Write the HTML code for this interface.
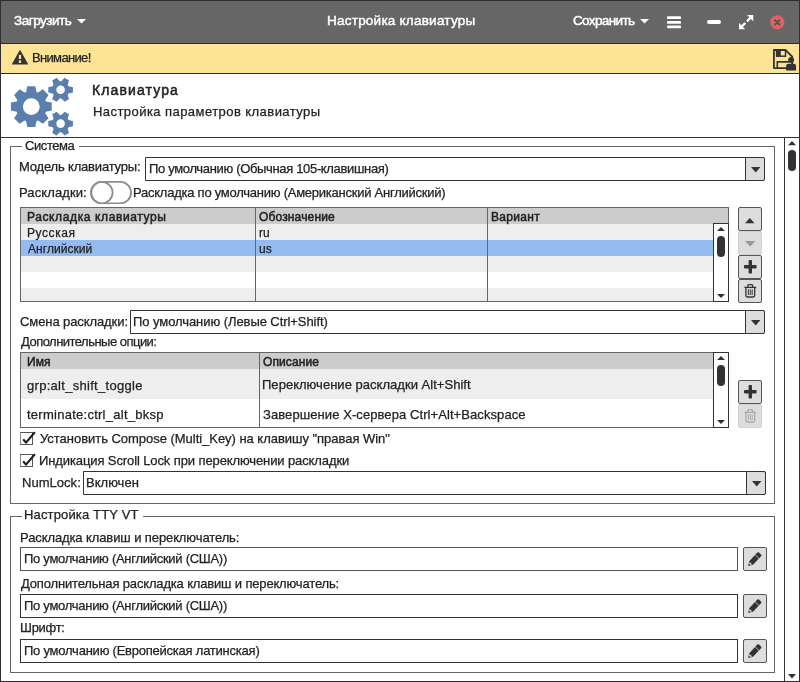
<!DOCTYPE html>
<html><head><meta charset="utf-8"><style>
html,body{margin:0;padding:0;width:800px;height:682px;overflow:hidden;background:#fff}
div{position:absolute}
.t{white-space:nowrap;font-family:"Liberation Sans",sans-serif;will-change:transform;-webkit-text-stroke:0.25px currentColor}
</style></head><body>
<div style="left:0px;top:0px;width:800px;height:682px;background:#fff"></div>
<div style="left:0px;top:0px;width:800px;height:44px;background:#666"></div>
<div style="left:0px;top:44px;width:800px;height:29px;background:#fde396"></div>
<div style="left:0px;top:0px;width:800px;height:1px;background:#2f2f2f"></div>
<div style="left:0px;top:681px;width:800px;height:1px;background:#2f2f2f"></div>
<div style="left:0px;top:0px;width:1px;height:682px;background:#2f2f2f"></div>
<div style="left:799px;top:0px;width:1px;height:682px;background:#2f2f2f"></div>
<div style="left:0px;top:43px;width:800px;height:1px;background:#2b2b2b"></div>
<div style="left:0px;top:73px;width:800px;height:1px;background:#2b2b2b"></div>
<div style="left:0px;top:137px;width:800px;height:1px;background:#333"></div>
<div class="t" style="left:13.56px;top:14.13px;font-size:13.5px;line-height:13.5px;letter-spacing:-0.475px;color:#fff;-webkit-text-stroke:0.45px #fff;">Загрузить</div>
<svg style="position:absolute;left:77px;top:19.4px" width="9" height="5" viewBox="0 0 9 5"><path d="M0 0H9L4.5 4.5Z" fill="#fff"/></svg>
<div class="t" style="left:326.89px;top:14.13px;font-size:13.5px;line-height:13.5px;letter-spacing:0.235px;color:#fff;-webkit-text-stroke:0.45px #fff;">Настройка клавиатуры</div>
<div class="t" style="left:573.31px;top:14.13px;font-size:13.5px;line-height:13.5px;letter-spacing:-0.625px;color:#fff;-webkit-text-stroke:0.45px #fff;">Сохранить</div>
<svg style="position:absolute;left:639.5px;top:19.4px" width="9" height="5" viewBox="0 0 9 5"><path d="M0 0H9L4.5 4.5Z" fill="#fff"/></svg>
<svg style="position:absolute;left:667px;top:16px" width="14" height="13" viewBox="0 0 14 13"><rect x="0" y="0.3" width="14" height="2.8" rx="0.9" fill="#fff"/><rect x="0" y="5.0" width="14" height="2.8" rx="0.9" fill="#fff"/><rect x="0" y="9.4" width="14" height="2.8" rx="0.9" fill="#fff"/></svg>
<svg style="position:absolute;left:707px;top:20px" width="14" height="4" viewBox="0 0 14 4"><rect x="0" y="0" width="14" height="4" rx="2" fill="#fff"/></svg>
<svg style="position:absolute;left:738.5px;top:14.8px" width="15" height="15" viewBox="0 0 15 15"><g fill="#fff" transform="scale(0.95)"><path d="M15 0 L15 6.5 L12.6 4.1 L9.2 7.5 L7.5 5.8 L10.9 2.4 L8.5 0Z"/><path d="M0 15 L0 8.5 L2.4 10.9 L5.8 7.5 L7.5 9.2 L4.1 12.6 L6.5 15Z"/></g></svg>
<svg style="position:absolute;left:769.5px;top:14.8px" width="15" height="15" viewBox="0 0 15 15"><circle cx="7.3" cy="7.3" r="7.1" fill="#e06262"/><path d="M5.1 5.1L9.5 9.5M9.5 5.1L5.1 9.5" stroke="#505050" stroke-width="1.8" stroke-linecap="round"/></svg>
<svg style="position:absolute;left:12px;top:50px" width="16" height="15" viewBox="0 0 16 15"><path d="M7.5 0.6 Q8 -0.2 8.5 0.6 L15.8 13.6 Q16.2 14.6 15.2 14.6 H0.8 Q-0.2 14.6 0.2 13.6Z" fill="#333"/><rect x="6.8" y="4.9" width="2.3" height="4.2" fill="#fde396"/><rect x="6.8" y="10.4" width="2.3" height="2.5" fill="#fde396"/></svg>
<div class="t" style="left:32.03px;top:50.75px;font-size:13px;line-height:13px;letter-spacing:-0.664px;color:#222;">Внимание!</div>
<svg style="position:absolute;left:773px;top:49px" width="24" height="22" viewBox="0 0 24 22"><path d="M0.9 1.0 H12.5 L19.2 7.7 V19.1 H0.9Z" fill="none" stroke="#333" stroke-width="1.8" stroke-linejoin="round"/><rect x="3.6" y="1.2" width="8.9" height="6" fill="none" stroke="#333" stroke-width="1.5"/><rect x="3.4" y="1" width="4.4" height="6.4" fill="#333"/><path d="M4.3 19 V12.85 H16" fill="none" stroke="#333" stroke-width="1.6"/><circle cx="18.1" cy="11" r="2.9" fill="#333"/><path d="M13.1 21.5 V17 Q13.1 14.8 15.5 14.8 H20.7 Q23.1 14.8 23.1 17 V21.5Z" fill="#333"/></svg>
<svg style="position:absolute;left:5px;top:74px" width="80" height="63" viewBox="0 0 80 63"><path fill-rule="evenodd" fill="#5a7fad" d="M21.10 18.00 L22.32 12.18 L30.28 12.18 L31.50 18.00 L32.95 18.60 L37.93 15.35 L43.55 20.97 L40.30 25.95 L40.90 27.40 L46.72 28.62 L46.72 36.58 L40.90 37.80 L40.30 39.25 L43.55 44.23 L37.93 49.85 L32.95 46.60 L31.50 47.20 L30.28 53.02 L22.32 53.02 L21.10 47.20 L19.65 46.60 L14.67 49.85 L9.05 44.23 L12.30 39.25 L11.70 37.80 L5.88 36.58 L5.88 28.62 L11.70 27.40 L12.30 25.95 L9.05 20.97 L14.67 15.35 L19.65 18.60Z M34.70 32.60 A8.4 8.4 0 1 0 17.90 32.60 A8.4 8.4 0 1 0 34.70 32.60Z"/><path fill-rule="evenodd" fill="#5a7fad" d="M63.53 12.21 L67.93 13.22 L67.93 18.38 L63.53 19.39 L62.67 20.87 L64.00 25.19 L59.53 27.77 L56.45 24.46 L54.75 24.46 L51.67 27.77 L47.20 25.19 L48.53 20.87 L47.67 19.39 L43.27 18.38 L43.27 13.22 L47.67 12.21 L48.53 10.73 L47.20 6.41 L51.67 3.83 L54.75 7.14 L56.45 7.14 L59.53 3.83 L64.00 6.41 L62.67 10.73Z M59.90 15.80 A4.3 4.3 0 1 0 51.30 15.80 A4.3 4.3 0 1 0 59.90 15.80Z"/><path fill-rule="evenodd" fill="#5a7fad" d="M63.53 46.01 L67.93 47.02 L67.93 52.18 L63.53 53.19 L62.67 54.67 L64.00 58.99 L59.53 61.57 L56.45 58.26 L54.75 58.26 L51.67 61.57 L47.20 58.99 L48.53 54.67 L47.67 53.19 L43.27 52.18 L43.27 47.02 L47.67 46.01 L48.53 44.53 L47.20 40.21 L51.67 37.63 L54.75 40.94 L56.45 40.94 L59.53 37.63 L64.00 40.21 L62.67 44.53Z M59.90 49.60 A4.3 4.3 0 1 0 51.30 49.60 A4.3 4.3 0 1 0 59.90 49.60Z"/></svg>
<div class="t" style="left:92.45px;top:82.60px;font-size:14px;line-height:14px;letter-spacing:1.112px;color:#222;-webkit-text-stroke:0.5px currentColor;">Клавиатура</div>
<div class="t" style="left:92.53px;top:105.05px;font-size:13px;line-height:13px;letter-spacing:0.443px;color:#222;">Настройка параметров клавиатуры</div>
<div style="left:784px;top:138px;width:1px;height:543px;background:#333"></div>
<svg style="position:absolute;left:788px;top:140.7px" width="8" height="5" viewBox="0 0 8 5"><path d="M0 4.2 L4 0 L8 4.2Z" fill="#333"/></svg>
<div style="left:788px;top:150px;width:8px;height:21px;background:#333;border-radius:4px"></div>
<svg style="position:absolute;left:788px;top:674px" width="8" height="5" viewBox="0 0 8 5"><path d="M0 0 L8 0 L4 4.5Z" fill="#333"/></svg>
<div style="left:10px;top:146px;width:765px;height:358px;box-sizing:border-box;border:1px solid #666;background:transparent;border-radius:0px;"></div>
<div style="left:22px;top:144px;width:57px;height:4px;background:#fff"></div>
<div class="t" style="left:24.74px;top:138.55px;font-size:13px;line-height:13px;letter-spacing:-0.424px;color:#222;">Система</div>
<div class="t" style="left:19.23px;top:159.75px;font-size:13px;line-height:13px;letter-spacing:-0.184px;color:#222;">Модель клавиатуры:</div>
<div style="left:145px;top:157px;width:620px;height:24px;box-sizing:border-box;border:1px solid #333;background:#fff;border-radius:0px;border-radius:0 2px 2px 0"></div>
<div style="left:745px;top:157px;width:20px;height:24px;box-sizing:border-box;border:1px solid #333;background:#ddd;border-radius:0px;border-radius:0 2px 2px 0"></div>
<svg style="position:absolute;left:751px;top:166.5px" width="10" height="6" viewBox="0 0 10 6"><path d="M0 0 L9.4 0 L4.7 5.6Z" fill="#333"/></svg>
<div class="t" style="left:148.55px;top:162.25px;font-size:13px;line-height:13px;letter-spacing:-0.336px;color:#222;">По умолчанию (Обычная 105-клавишная)</div>
<div class="t" style="left:19.23px;top:185.95px;font-size:13px;line-height:13px;letter-spacing:0.100px;color:#222;">Раскладки:</div>
<svg style="position:absolute;left:90px;top:181px" width="42" height="23" viewBox="0 0 42 23"><rect x="0.9" y="0.9" width="40.2" height="21.4" rx="10.7" fill="#fff" stroke="#8c8c8c" stroke-width="1.8"/><circle cx="11.9" cy="11.6" r="10.7" fill="#fff" stroke="#8c8c8c" stroke-width="1.8"/></svg>
<div class="t" style="left:133.43px;top:186.25px;font-size:13px;line-height:13px;letter-spacing:-0.243px;color:#222;">Раскладка по умолчанию (Американский Английский)</div>
<div style="left:21px;top:208px;width:707px;height:93px;background:#fff"></div>
<div style="left:21px;top:208px;width:707px;height:16px;background:#ccc"></div>
<div style="left:21px;top:224px;width:692px;height:16px;background:#eee"></div>
<div style="left:21px;top:240px;width:692px;height:16px;background:#93bbf0"></div>
<div style="left:21px;top:256px;width:692px;height:16px;background:#eee"></div>
<div style="left:21px;top:272px;width:692px;height:16px;background:#fff"></div>
<div style="left:21px;top:288px;width:692px;height:13px;background:#eee"></div>
<div style="left:20px;top:207px;width:709px;height:95px;box-sizing:border-box;border:1px solid #666;background:transparent;border-radius:0px;"></div>
<div style="left:255px;top:208px;width:1px;height:93px;background:#666"></div>
<div style="left:487px;top:208px;width:1px;height:93px;background:#666"></div>
<div class="t" style="left:26.92px;top:211.00px;font-size:12px;line-height:12px;letter-spacing:0.615px;color:#222;-webkit-text-stroke:0.5px currentColor;">Раскладка клавиатуры</div>
<div class="t" style="left:258.93px;top:211.00px;font-size:12px;line-height:12px;letter-spacing:0.149px;color:#222;-webkit-text-stroke:0.5px currentColor;">Обозначение</div>
<div class="t" style="left:490.52px;top:211.00px;font-size:12px;line-height:12px;letter-spacing:0.323px;color:#222;-webkit-text-stroke:0.5px currentColor;">Вариант</div>
<div class="t" style="left:26.92px;top:226.80px;font-size:12px;line-height:12px;letter-spacing:0.565px;color:#222;">Русская</div>
<div class="t" style="left:258.70px;top:226.80px;font-size:12px;line-height:12px;letter-spacing:0.000px;color:#222;">ru</div>
<div class="t" style="left:27.88px;top:242.80px;font-size:12px;line-height:12px;letter-spacing:0.054px;color:#222;">Английский</div>
<div class="t" style="left:258.72px;top:242.80px;font-size:12px;line-height:12px;letter-spacing:0.000px;color:#222;">us</div>
<div style="left:713px;top:223px;width:16px;height:79px;box-sizing:border-box;border:1px solid #333;background:#fff;border-radius:0px;"></div>
<svg style="position:absolute;left:717px;top:227px" width="8" height="4" viewBox="0 0 8 4"><path d="M0 4 L4 0 L8 4Z" fill="#333"/></svg>
<div style="left:717px;top:236px;width:8px;height:21px;background:#333;border-radius:4px"></div>
<svg style="position:absolute;left:717px;top:294px" width="8" height="4" viewBox="0 0 8 4"><path d="M0 0 L8 0 L4 4Z" fill="#333"/></svg>
<div style="left:738px;top:207px;width:24px;height:24px;box-sizing:border-box;border:1px solid #555;background:#ddd;border-radius:2px;"></div>
<svg style="position:absolute;left:745.4px;top:217.6px" width="10" height="6" viewBox="0 0 10 6"><path d="M0 5.2 L4.8 0 L9.6 5.2Z" fill="#333"/></svg>
<div style="left:738px;top:231px;width:24px;height:24px;box-sizing:border-box;border:1px solid #d2d2d2;background:#ddd;border-radius:2px;"></div>
<svg style="position:absolute;left:744.7px;top:240.9px" width="11" height="6" viewBox="0 0 11 6"><path d="M0 0 L10.4 0 L5.2 5.4Z" fill="#999"/></svg>
<div style="left:738px;top:255px;width:24px;height:24px;box-sizing:border-box;border:1px solid #555;background:#ddd;border-radius:2px;"></div>
<svg style="position:absolute;left:743.8px;top:259.7px" width="13" height="14" viewBox="0 0 13 14"><rect x="0" y="5" width="12.6" height="3.4" rx="0.8" fill="#333"/><rect x="4.6" y="0" width="3.4" height="13.5" rx="0.8" fill="#333"/></svg>
<div style="left:738px;top:279px;width:24px;height:24px;box-sizing:border-box;border:1px solid #555;background:#ddd;border-radius:2px;"></div>
<svg style="position:absolute;left:743.8px;top:284px" width="13" height="14" viewBox="0 0 13 14"><g fill="none" stroke="#333" stroke-width="1.3"><path d="M0.4 3.4 H12.2"/><path d="M3.8 3.4 V1.8 Q3.8 0.7 4.9 0.7 H7.6 Q8.7 0.7 8.7 1.8 V3.4"/><path d="M1.9 3.4 V11.6 Q1.9 13 3.3 13 H9.3 Q10.7 13 10.7 11.6 V3.4"/></g><path d="M4.4 5.4 V11 M6.3 5.4 V11 M8.2 5.4 V11" stroke="#333" stroke-width="1"/></svg>
<div class="t" style="left:20.34px;top:314.95px;font-size:13px;line-height:13px;letter-spacing:-0.089px;color:#222;">Смена раскладки:</div>
<div style="left:130px;top:310px;width:635px;height:24px;box-sizing:border-box;border:1px solid #333;background:#fff;border-radius:0px;border-radius:0 2px 2px 0"></div>
<div style="left:745px;top:310px;width:20px;height:24px;box-sizing:border-box;border:1px solid #333;background:#ddd;border-radius:0px;border-radius:0 2px 2px 0"></div>
<svg style="position:absolute;left:751px;top:319.5px" width="10" height="6" viewBox="0 0 10 6"><path d="M0 0 L9.4 0 L4.7 5.6Z" fill="#333"/></svg>
<div class="t" style="left:133.35px;top:314.95px;font-size:13px;line-height:13px;letter-spacing:-0.067px;color:#222;">По умолчанию (Левые Ctrl+Shift)</div>
<div class="t" style="left:20.90px;top:334.95px;font-size:13px;line-height:13px;letter-spacing:-0.520px;color:#222;">Дополнительные опции:</div>
<div style="left:21px;top:353px;width:707px;height:74px;background:#fff"></div>
<div style="left:21px;top:353px;width:707px;height:16px;background:#ccc"></div>
<div style="left:21px;top:369px;width:692px;height:30px;background:#eee"></div>
<div style="left:20px;top:352px;width:709px;height:76px;box-sizing:border-box;border:1px solid #666;background:transparent;border-radius:0px;"></div>
<div style="left:259px;top:353px;width:1px;height:74px;background:#666"></div>
<div class="t" style="left:26.52px;top:356.00px;font-size:12px;line-height:12px;letter-spacing:0.000px;color:#222;-webkit-text-stroke:0.5px currentColor;">Имя</div>
<div class="t" style="left:262.73px;top:356.00px;font-size:12px;line-height:12px;letter-spacing:0.091px;color:#222;-webkit-text-stroke:0.5px currentColor;">Описание</div>
<div class="t" style="left:26.95px;top:378.95px;font-size:13px;line-height:13px;letter-spacing:0.291px;color:#222;">grp:alt_shift_toggle</div>
<div class="t" style="left:262.25px;top:378.45px;font-size:13px;line-height:13px;letter-spacing:0.027px;color:#222;">Переключение раскладки Alt+Shift</div>
<div class="t" style="left:27.30px;top:408.15px;font-size:13px;line-height:13px;letter-spacing:0.260px;color:#222;">terminate:ctrl_alt_bksp</div>
<div class="t" style="left:262.87px;top:408.15px;font-size:13px;line-height:13px;letter-spacing:0.081px;color:#222;">Завершение X-сервера Ctrl+Alt+Backspace</div>
<div style="left:713px;top:352px;width:16px;height:76px;box-sizing:border-box;border:1px solid #333;background:#fff;border-radius:0px;"></div>
<svg style="position:absolute;left:717px;top:356px" width="8" height="4" viewBox="0 0 8 4"><path d="M0 4 L4 0 L8 4Z" fill="#333"/></svg>
<div style="left:717px;top:365px;width:8px;height:21px;background:#333;border-radius:4px"></div>
<svg style="position:absolute;left:717px;top:420px" width="8" height="4" viewBox="0 0 8 4"><path d="M0 0 L8 0 L4 4Z" fill="#333"/></svg>
<div style="left:738px;top:380px;width:24px;height:24px;box-sizing:border-box;border:1px solid #555;background:#ddd;border-radius:2px;"></div>
<svg style="position:absolute;left:743.8px;top:384.5px" width="13" height="14" viewBox="0 0 13 14"><rect x="0" y="5" width="12.6" height="3.4" rx="0.8" fill="#333"/><rect x="4.6" y="0" width="3.4" height="13.5" rx="0.8" fill="#333"/></svg>
<div style="left:738px;top:404px;width:24px;height:24px;box-sizing:border-box;border:1px solid #d2d2d2;background:#ddd;border-radius:2px;"></div>
<svg style="position:absolute;left:743.8px;top:408.5px" width="13" height="14" viewBox="0 0 13 14"><g fill="none" stroke="#aaa" stroke-width="1.3"><path d="M0.4 3.4 H12.2"/><path d="M3.8 3.4 V1.8 Q3.8 0.7 4.9 0.7 H7.6 Q8.7 0.7 8.7 1.8 V3.4"/><path d="M1.9 3.4 V11.6 Q1.9 13 3.3 13 H9.3 Q10.7 13 10.7 11.6 V3.4"/></g><path d="M4.4 5.4 V11 M6.3 5.4 V11 M8.2 5.4 V11" stroke="#aaa" stroke-width="1"/></svg>
<div style="left:20px;top:432px;width:13px;height:13px;box-sizing:border-box;border:1px solid #555;background:#fff;border-radius:0px;border-left-color:#8a8a8a"></div>
<svg style="position:absolute;left:21px;top:430.5px" width="16" height="14" viewBox="0 0 16 14"><path d="M2.8 9.0 L5.0 11.6 L13.4 1.8" fill="none" stroke="#222" stroke-width="2.2" stroke-linecap="round" stroke-linejoin="round"/></svg>
<div class="t" style="left:40.05px;top:432.35px;font-size:13px;line-height:13px;letter-spacing:-0.032px;color:#222;">Установить Compose (Multi_Key) на клавишу &quot;правая Win&quot;</div>
<div style="left:20px;top:454px;width:13px;height:13px;box-sizing:border-box;border:1px solid #555;background:#fff;border-radius:0px;border-left-color:#8a8a8a"></div>
<svg style="position:absolute;left:21px;top:452.5px" width="16" height="14" viewBox="0 0 16 14"><path d="M2.8 9.0 L5.0 11.6 L13.4 1.8" fill="none" stroke="#222" stroke-width="2.2" stroke-linecap="round" stroke-linejoin="round"/></svg>
<div class="t" style="left:39.33px;top:454.15px;font-size:13px;line-height:13px;letter-spacing:-0.108px;color:#222;">Индикация Scroll Lock при переключении раскладки</div>
<div class="t" style="left:21.93px;top:475.55px;font-size:13px;line-height:13px;letter-spacing:0.033px;color:#222;">NumLock:</div>
<div style="left:83px;top:471px;width:683px;height:24px;box-sizing:border-box;border:1px solid #333;background:#fff;border-radius:0px;border-radius:0 2px 2px 0"></div>
<div style="left:746px;top:471px;width:20px;height:24px;box-sizing:border-box;border:1px solid #333;background:#ddd;border-radius:0px;border-radius:0 2px 2px 0"></div>
<svg style="position:absolute;left:751.5px;top:480.5px" width="10" height="6" viewBox="0 0 10 6"><path d="M0 0 L9.4 0 L4.7 5.6Z" fill="#333"/></svg>
<div class="t" style="left:86.43px;top:475.55px;font-size:13px;line-height:13px;letter-spacing:0.015px;color:#222;">Включен</div>
<div style="left:10px;top:516px;width:765px;height:157px;box-sizing:border-box;border:1px solid #666;background:transparent;border-radius:0px;"></div>
<div style="left:22px;top:514px;width:121px;height:4px;background:#fff"></div>
<div class="t" style="left:24.33px;top:508.35px;font-size:13px;line-height:13px;letter-spacing:0.151px;color:#222;">Настройка TTY VT</div>
<div class="t" style="left:19.53px;top:531.15px;font-size:13px;line-height:13px;letter-spacing:-0.102px;color:#222;">Раскладка клавиш и переключатель:</div>
<div style="left:20px;top:547px;width:718px;height:24px;box-sizing:border-box;border:1px solid #555;background:#fff;border-radius:0px;"></div>
<div class="t" style="left:24.35px;top:551.65px;font-size:13px;line-height:13px;letter-spacing:-0.277px;color:#222;">По умолчанию (Английский (США))</div>
<div class="t" style="left:20.50px;top:576.95px;font-size:13px;line-height:13px;letter-spacing:-0.164px;color:#222;">Дополнительная раскладка клавиш и переключатель:</div>
<div style="left:20px;top:594px;width:718px;height:24px;box-sizing:border-box;border:1px solid #333;background:#fff;border-radius:0px;"></div>
<div class="t" style="left:24.35px;top:599.15px;font-size:13px;line-height:13px;letter-spacing:-0.277px;color:#222;">По умолчанию (Английский (США))</div>
<div class="t" style="left:19.53px;top:621.15px;font-size:13px;line-height:13px;letter-spacing:-0.283px;color:#222;">Шрифт:</div>
<div style="left:20px;top:639px;width:718px;height:24px;box-sizing:border-box;border:1px solid #333;background:#fff;border-radius:0px;"></div>
<div class="t" style="left:24.35px;top:643.95px;font-size:13px;line-height:13px;letter-spacing:-0.230px;color:#222;">По умолчанию (Европейская латинская)</div>
<div style="left:743px;top:547px;width:24px;height:24px;box-sizing:border-box;border:1px solid #555;background:#ddd;border-radius:2px;"></div>
<svg style="position:absolute;left:743px;top:547px" width="24" height="24" viewBox="0 0 24 24"><g transform="translate(5.2,19.0) rotate(-46.6)"><path d="M0 0 L4.2 -2.6 H16 Q17.2 -2.6 17.2 -1.4 V1.4 Q17.2 2.6 16 2.6 H4.2Z" fill="#333"/><path d="M2.2 -1.0 L4.0 -1.9 V1.9 L2.2 1.0Z" fill="#c8c8c8"/><path d="M12.9 -2.8 V2.8" stroke="#ddd" stroke-width="0.7"/></g></svg>
<div style="left:743px;top:594px;width:24px;height:24px;box-sizing:border-box;border:1px solid #555;background:#ddd;border-radius:2px;"></div>
<svg style="position:absolute;left:743px;top:594px" width="24" height="24" viewBox="0 0 24 24"><g transform="translate(5.2,19.0) rotate(-46.6)"><path d="M0 0 L4.2 -2.6 H16 Q17.2 -2.6 17.2 -1.4 V1.4 Q17.2 2.6 16 2.6 H4.2Z" fill="#333"/><path d="M2.2 -1.0 L4.0 -1.9 V1.9 L2.2 1.0Z" fill="#c8c8c8"/><path d="M12.9 -2.8 V2.8" stroke="#ddd" stroke-width="0.7"/></g></svg>
<div style="left:743px;top:639px;width:24px;height:24px;box-sizing:border-box;border:1px solid #555;background:#ddd;border-radius:2px;"></div>
<svg style="position:absolute;left:743px;top:639px" width="24" height="24" viewBox="0 0 24 24"><g transform="translate(5.2,19.0) rotate(-46.6)"><path d="M0 0 L4.2 -2.6 H16 Q17.2 -2.6 17.2 -1.4 V1.4 Q17.2 2.6 16 2.6 H4.2Z" fill="#333"/><path d="M2.2 -1.0 L4.0 -1.9 V1.9 L2.2 1.0Z" fill="#c8c8c8"/><path d="M12.9 -2.8 V2.8" stroke="#ddd" stroke-width="0.7"/></g></svg>
</body></html>
